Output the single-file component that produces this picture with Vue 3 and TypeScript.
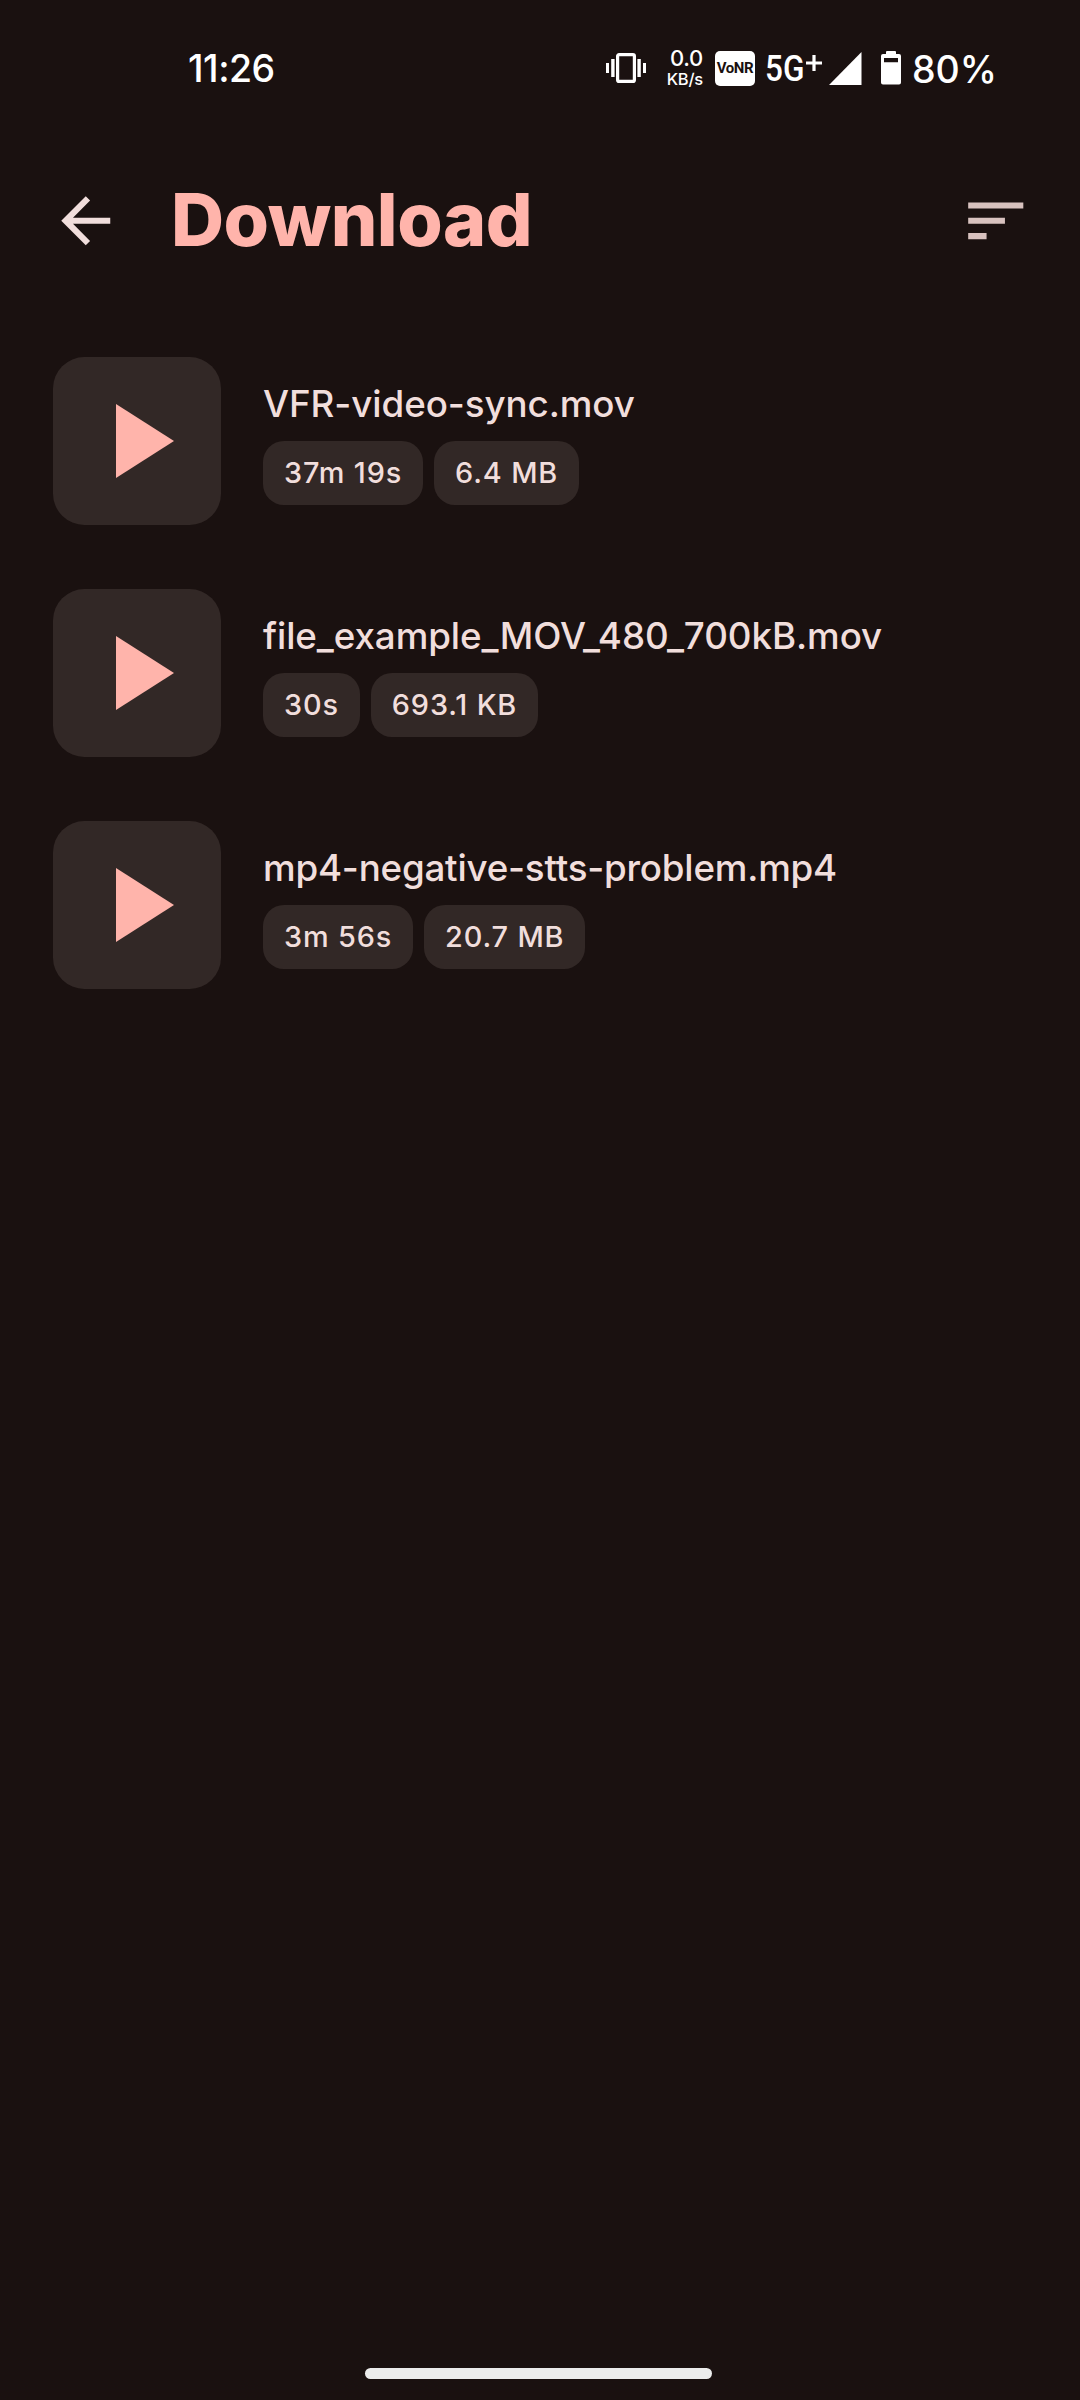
<script setup lang="ts">
interface VideoFile {
  name: string
  duration: string
  size: string
  tracking: number
}

const videos: VideoFile[] = [
  { name: 'VFR-video-sync.mov', duration: '37m 19s', size: '6.4 MB', tracking: -0.07 },
  { name: 'file_example_MOV_480_700kB.mov', duration: '30s', size: '693.1 KB', tracking: -0.08 },
  { name: 'mp4-negative-stts-problem.mp4', duration: '3m 56s', size: '20.7 MB', tracking: -0.21 },
]
</script>

<template>
  <div class="screen">
    <header class="status">
      <span class="clock">11:26</span>
      <div class="tray">
        <svg class="vibrate" width="40" height="30" viewBox="0 0 40 30">
          <rect x="11.6" y="1.6" width="16.8" height="26.8" rx="1.5" fill="none" stroke="#fff" stroke-width="3.2" />
          <path d="M0 10h3v10H0zM5.2 6h3.4v18H5.2zM31.4 6h3.4v18h-3.4zM37 10h3v10h-3z" fill="#fff" />
        </svg>
        <div class="speed">
          <span class="rate">0.0</span>
          <span class="unit">KB/s</span>
        </div>
        <span class="vonr">VoNR</span>
        <span class="net">5G</span>
        <svg class="plus" width="16" height="16" viewBox="0 0 16 16">
          <path d="M6.4 0h3.2v6.4H16v3.2H9.6V16H6.4V9.6H0V6.4h6.4z" fill="#fff" />
        </svg>
        <svg class="signal" width="33" height="33" viewBox="0 0 33 33">
          <path d="M0 33L32.5 0v33z" fill="#fff" />
        </svg>
        <svg class="battery" width="20" height="34" viewBox="0 0 20 34">
          <path
            fill="#fff"
            fill-rule="evenodd"
            d="M6 0h8q1 0 1 1v2h3q2 0 2 2v26.500q0 2-2 2H2q-2 0-2-2V5q0-2 2-2h3V1q0-1 1-1zM3 7v4.200h14V7z"
          />
        </svg>
        <span class="percent">80%</span>
      </div>
    </header>

    <div class="appbar">
      <svg class="back" width="73.5" height="73.5" viewBox="0 0 24 24">
        <path fill="#f1dedc" d="M20 11H7.830l5.590-5.590L12 4l-8 8 8 8 1.410-1.410L7.830 13H20z" />
      </svg>
      <h1 class="title">Download</h1>
      <svg class="sort" width="73.5" height="73.5" viewBox="0 0 24 24">
        <path fill="#d8c2bf" d="M3 18h6v-2H3zM3 6v2h18V6zm0 7h12v-2H3z" />
      </svg>
    </div>

    <main class="list">
      <article v-for="video in videos" :key="video.name" class="row">
        <div class="thumb">
          <svg width="58" height="74" viewBox="0 0 58 74">
            <path d="M0 0L58 37L0 74z" fill="#ffb4ab" />
          </svg>
        </div>
        <div class="info">
          <span class="name" :style="{ letterSpacing: video.tracking + 'px' }">{{ video.name }}</span>
          <div class="chips">
            <span class="chip">{{ video.duration }}</span>
            <span class="chip">{{ video.size }}</span>
          </div>
        </div>
      </article>
    </main>

    <footer class="nav"><div class="handle"></div></footer>
  </div>
</template>

<style>
body {
  background: #1a1110;
}
</style>

<style scoped>
.screen {
  width: 1080px;
  height: 2400px;
  display: flex;
  flex-direction: column;
  background: #1a1110;
  color: #f1dedc;
  font-family: Inter, Roboto, sans-serif;
  overflow: hidden;
}
.screen * {
  box-sizing: border-box;
  white-space: nowrap;
}
.screen svg {
  display: block;
  flex: none;
}
.status {
  height: 136px;
  display: flex;
  align-items: center;
  justify-content: space-between;
  padding: 0 88px 0 188px;
  color: #fff;
}
.clock {
  font-size: 37.5px;
  font-weight: 500;
  letter-spacing: -0.5px;
}
.tray {
  display: flex;
  align-items: center;
}
.speed {
  width: 38px;
  margin-left: 19px;
  display: flex;
  flex-direction: column;
  align-items: flex-end;
}
.rate {
  font-size: 22px;
  line-height: 20px;
  font-weight: 500;
  letter-spacing: -0.3px;
}
.unit {
  font-size: 16.500px;
  line-height: 20px;
  margin-top: 1px;
  font-weight: 500;
  letter-spacing: -0.2px;
}
.vonr {
  width: 40px;
  height: 35px;
  margin-left: 12px;
  border-radius: 5px;
  background: #fff;
  color: #1a1110;
  font-family: Roboto, sans-serif;
  font-size: 15px;
  font-weight: 700;
  line-height: 35px;
  letter-spacing: -0.4px;
  display: flex;
  justify-content: center;
}
.net {
  width: 38px;
  margin-left: 10px;
  font-family: Roboto, sans-serif;
  font-size: 37.5px;
  font-weight: 500;
  transform: scaleX(0.84);
  transform-origin: left;
}
.plus {
  margin-left: 3px;
  margin-bottom: 11px;
}
.signal {
  margin-left: 7px;
}
.battery {
  margin-left: 19px;
}
.percent {
  margin-left: 11px;
  font-size: 37.5px;
  font-weight: 450;
  width: 80px;
  position: relative;
  top: 1px;
}
.appbar {
  height: 170px;
  display: flex;
  align-items: center;
  padding: 0 48px 0 49px;
}
.title {
  flex: 1;
  margin: 0 0 3px 48.5px;
  font-size: 73.5px;
  line-height: 90px;
  font-weight: 800;
  letter-spacing: -0.5px;
  color: #ffb4ab;
}
.list {
  flex: 1;
  padding: 51px 53px 0;
  display: flex;
  flex-direction: column;
  gap: 64px;
}
.row {
  display: flex;
  height: 168px;
}
.thumb {
  width: 168px;
  height: 168px;
  border-radius: 31.5px;
  background: #322826;
  display: flex;
  align-items: center;
  padding-left: 63px;
}
.info {
  margin-left: 42px;
  padding-top: 20px;
}
.name {
  display: block;
  font-size: 36.75px;
  line-height: 53px;
  font-weight: 500;
}
.chips {
  display: flex;
  gap: 11px;
  margin-top: 11px;
}
.chip {
  height: 64px;
  padding: 0 21px;
  border-radius: 21px;
  background: #322826;
  font-size: 28.875px;
  line-height: 64px;
  font-weight: 500;
  letter-spacing: 0.85px;
}
.nav {
  height: 32px;
  display: flex;
  padding-left: 365px;
}
.handle {
  width: 347px;
  height: 11px;
  border-radius: 6px;
  background: #ececec;
}
</style>
